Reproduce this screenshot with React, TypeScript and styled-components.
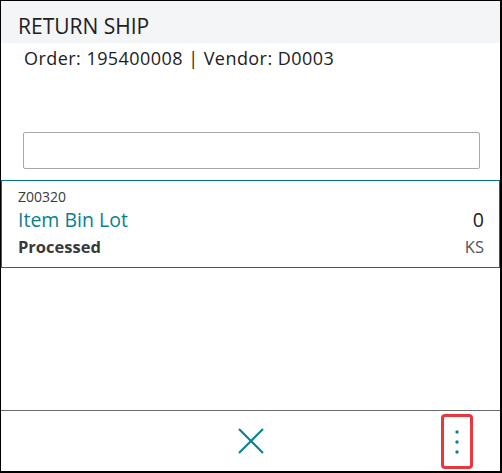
import React from "react";
import styled, { createGlobalStyle } from "styled-components";

const Global = createGlobalStyle`
  html, body { margin: 0; padding: 0; background: #fff; }
  body { font-family: "Open Sans", "Noto Sans", sans-serif; }
  * { box-sizing: border-box; }
`;

const Frame = styled.div`
  width: 502px;
  height: 473px;
  border: 1px solid #000;
  border-right-width: 2px;
  border-bottom-width: 2px;
  display: flex;
  flex-direction: column;
  background: #fff;
  color: #212121;
`;

const Header = styled.div`
  background: #f4f5f7;
  height: 42px;
  padding: 11px 0 0 17px;
  font-size: 21px;
  line-height: 28px;
  color: #212121;
`;

const SubHeader = styled.div`
  padding: 2px 0 0 23px;
  font-size: 18px;
  line-height: 26px;
  letter-spacing: 0.45px;
  color: #212121;
`;

const Body = styled.div`
  flex: 1;
  display: flex;
  flex-direction: column;
`;

const SearchWrap = styled.div`
  padding: 61px 20px 0 22px;
`;

const SearchInput = styled.input`
  width: 100%;
  height: 37px;
  border: 1px solid #a8a8a8;
  border-radius: 2px;
  outline: none;
  background: #fff;
`;

const Card = styled.div`
  margin-top: 11px;
  border: 1.5px solid #00777a;
  height: 88px;
  padding: 7px 15px 0 16px;
  display: grid;
  grid-template-columns: 1fr auto;
  grid-template-rows: 18px 28px 26px;
`;

const Code = styled.div`
  grid-column: 1 / 3;
  font-size: 14px;
  line-height: 18px;
  color: #3a3a3a;
`;

const Title = styled.div`
  font-size: 19.5px;
  line-height: 28px;
  color: #0a7f8c;
`;

const Qty = styled.div`
  font-size: 19.5px;
  line-height: 28px;
  color: #212121;
  text-align: right;
`;

const Status = styled.div`
  font-size: 16.5px;
  line-height: 26px;
  font-weight: 700;
  color: #3a3a3a;
`;

const Unit = styled.div`
  font-size: 16.5px;
  line-height: 26px;
  color: #555;
  text-align: right;
`;

const Footer = styled.div`
  height: 61px;
  border-top: 1.5px solid #6b6b6b;
  display: flex;
  align-items: center;
  justify-content: center;
  position: relative;
`;

const IconButton = styled.button`
  background: none;
  border: none;
  padding: 0;
  display: flex;
  align-items: center;
  justify-content: center;
  cursor: pointer;
`;

const MoreButton = styled(IconButton)`
  position: absolute;
  left: 440px;
  top: 3px;
  width: 32px;
  height: 55px;
  border: 3px solid #e8383d;
  border-radius: 4px;
`;

export default function App() {
  return (
    <>
      <Global />
      <Frame>
        <Header>RETURN SHIP</Header>
        <SubHeader>Order: 195400008 | Vendor: D0003</SubHeader>
        <Body>
          <SearchWrap>
            <SearchInput />
          </SearchWrap>
          <Card>
            <Code>Z00320</Code>
            <Title>Item Bin Lot</Title>
            <Qty>0</Qty>
            <Status>Processed</Status>
            <Unit>KS</Unit>
          </Card>
        </Body>
        <Footer>
          <IconButton aria-label="Close">
            <svg width="28" height="28" viewBox="0 0 28 28">
              <path d="M2 2 L26 26 M26 2 L2 26" stroke="#0a8291" strokeWidth="2.2" fill="none" />
            </svg>
          </IconButton>
          <MoreButton aria-label="More">
            <svg width="6" height="26" viewBox="0 0 6 26">
              <circle cx="3" cy="3" r="1.7" fill="#0a8291" />
              <circle cx="3" cy="13" r="1.7" fill="#0a8291" />
              <circle cx="3" cy="23" r="1.7" fill="#0a8291" />
            </svg>
          </MoreButton>
        </Footer>
      </Frame>
    </>
  );
}
